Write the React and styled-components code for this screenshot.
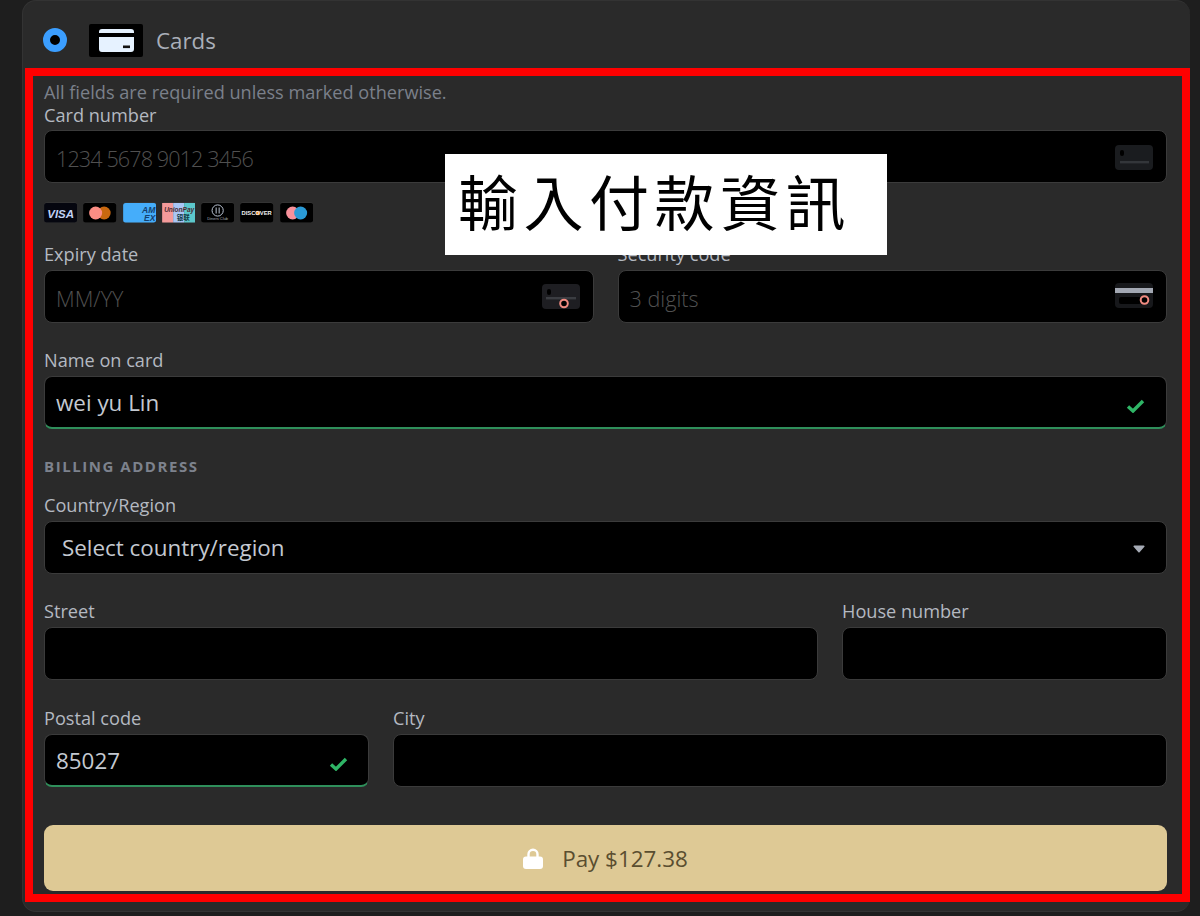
import React from "react";
import styled, { createGlobalStyle } from "styled-components";

const GlobalStyle = createGlobalStyle`
  html, body {
    margin: 0;
    background: #1e1e1e;
    font-family: "Open Sans", "Noto Sans", sans-serif;
  }
  * { box-sizing: border-box; }
`;

const Page = styled.div`
  position: relative;
  width: 1200px;
  height: 916px;
  overflow: hidden;
  padding-left: 22px;
`;

const Panel = styled.div`
  width: 1168px;
  height: 912px;
  background: #2a2a2a;
  border: 1px solid #333;
  border-right: 0;
  border-radius: 14px;
`;

const MethodHeader = styled.div`
  display: flex;
  align-items: center;
  height: 67px;
  padding: 11px 0 0 20px;
`;

const Radio = styled.span`
  width: 24px;
  height: 24px;
  border-radius: 50%;
  background: #000;
  border: 7px solid #3b9eff;
  margin-right: 22px;
`;

const MethodIcon = styled.span`
  display: flex;
  align-items: center;
  justify-content: center;
  width: 54px;
  height: 33px;
  background: #000;
  border-radius: 2px;
  margin-right: 13px;
`;

const MethodName = styled.span`
  font-size: 22.3px;
  color: #a9afb9;
`;

const Form = styled.form`
  margin-left: 2px;
  height: 834px;
  border: 8px solid #fe0000;
  padding: 5px 15px 0 11px;
`;

const Hint = styled.p`
  margin: 0;
  font-size: 18.15px;
  line-height: 22px;
  color: #7b808a;
`;

const Label = styled.label`
  display: block;
  font-size: 18.15px;
  line-height: 24px;
  margin-bottom: ${props => props.$tight ? "3px" : "4px"};
  color: #b4b9c1;
  white-space: nowrap;
`;

const Row = styled.div`
  display: grid;
  grid-template-columns: ${props => props.$columns || "1fr"};
  column-gap: 24px;
  margin-top: ${props => props.$top || "25px"};
`;

const InputWrap = styled.div`
  position: relative;
`;

const Input = styled.input`
  display: block;
  width: 100%;
  height: 53px;
  padding: 0 ${props => props.$select ? "17px" : "11px"};
  margin: 0;
  background: #000;
  border: 1px solid #3b3b3b;
  border-bottom: ${props => props.$valid ? "2px solid #2f8f5b" : "1px solid #3b3b3b"};
  border-radius: 8px;
  outline: none;
  font-family: inherit;
  font-size: 22.4px;
  color: #c4c9d1;

  &:placeholder-shown {
    padding-top: 4px;
  }

  &::placeholder {
    font-size: 21.6px;
    font-weight: 300;
    letter-spacing: ${props => props.$narrow ? "-0.9px" : "0"};
    color: #505050;
    opacity: 1;
  }
`;

const FieldIcon = styled.span`
  position: absolute;
  top: ${props => props.$top};
  right: ${props => props.$right};
  display: flex;
`;

const Logos = styled.div`
  display: flex;
  gap: 6px;
  margin-top: 19px;
  height: 21px;
`;

const LogoSvg = styled.svg`
  display: block;
  width: 33.3px;
  height: 21px;
`;

const BillingTitle = styled.h3`
  margin: 27px 0 0;
  font-size: 15px;
  line-height: 20px;
  font-weight: 700;
  letter-spacing: 1.55px;
  color: #7d828d;
`;

const PayButton = styled.button`
  display: flex;
  align-items: center;
  justify-content: center;
  gap: 19px;
  width: 100%;
  height: 66px;
  margin-top: 38px;
  background: #dec995;
  border: 0;
  border-radius: 9px;
  font-family: inherit;
  font-size: 22.4px;
  color: #5a4e30;
`;

const Caption = styled.div`
  position: absolute;
  left: 445px;
  top: 154px;
  width: 442px;
  height: 101px;
  padding: 11px 0 0 13px;
  background: #fff;
  color: #000;
  font-family: "Noto Sans CJK TC", serif;
  font-size: 60px;
  line-height: 70px;
  letter-spacing: 5.5px;
  white-space: nowrap;
`;

const CardGlyph = () => (
  <svg width="35" height="23" viewBox="0 0 35 23">
    <path d="M3 0h29a3 3 0 0 1 3 3v1H0V3a3 3 0 0 1 3-3zM0 8h35v12a3 3 0 0 1-3 3H3a3 3 0 0 1-3-3z" fill="#e6f2ff" />
    <rect x="24" y="16.5" width="7" height="2.6" fill="#111" />
  </svg>
);

const NumberIcon = () => (
  <svg width="38" height="25" viewBox="0 0 38 25">
    <rect width="38" height="25" rx="4" fill="#1a1c1f" />
    <rect x="5" y="5" width="4" height="6" rx="2" fill="#000" />
    <rect x="5" y="16" width="29" height="2.4" fill="#33363a" />
  </svg>
);

const ExpiryIcon = () => (
  <svg width="38" height="25" viewBox="0 0 38 25">
    <rect width="38" height="25" rx="4" fill="#1e1e22" />
    <rect x="5" y="5" width="4" height="6" rx="2" fill="#000" />
    <rect x="4" y="13" width="30" height="2.4" fill="#3b3d42" />
    <circle cx="22" cy="19.5" r="3.8" fill="#000" stroke="#f08a80" strokeWidth="2" />
  </svg>
);

const SecurityIcon = () => (
  <svg width="38" height="25" viewBox="0 0 38 25">
    <rect width="38" height="25" rx="4" fill="#17181b" />
    <rect y="5" width="38" height="5" fill="#a3a8b3" />
    <rect x="4" y="14" width="22" height="7" rx="2" fill="#000" />
    <circle cx="29.5" cy="17" r="3.8" fill="#000" stroke="#f08a80" strokeWidth="2" />
  </svg>
);

const Check = () => (
  <svg width="19" height="14" viewBox="0 0 19 14">
    <path d="M2 7.5l5 4.5L17 2" fill="none" stroke="#2fb566" strokeWidth="3.4" />
  </svg>
);

const Caret = () => (
  <svg width="12" height="8" viewBox="0 0 12 8">
    <path d="M1.2 0.5h9.6a.8.8 0 0 1 .6 1.3L6.6 7.2a.8.8 0 0 1-1.2 0L.6 1.8A.8.8 0 0 1 1.2.5z" fill="#a6abb5" />
  </svg>
);

const Lock = () => (
  <svg width="20" height="21" viewBox="0 0 20 21">
    <path d="M5.5 10V6.2a4.5 4.5 0 0 1 9 0V10" fill="none" stroke="#fff" strokeWidth="2.4" />
    <rect y="8.5" width="20" height="12.5" rx="3" fill="#fff" />
  </svg>
);

const LogoFrame = ({ bg = "#000", children }) => (
  <LogoSvg viewBox="0 0 33 21">
    <rect width="33" height="21" rx="3" fill="#333" />
    <rect y="1" width="33" height="19.5" rx="2.5" fill={bg} />
    {children}
  </LogoSvg>
);

const Visa = () => (
  <LogoFrame bg="#05060f">
    <text x="16.5" y="15.5" textAnchor="middle" fontFamily="Liberation Sans" fontSize="11.5" fontWeight="700" fontStyle="italic" fill="#c2d2f5">VISA</text>
  </LogoFrame>
);

const Mastercard = () => (
  <LogoFrame>
    <circle cx="21" cy="11" r="6.5" fill="#c9680f" />
    <circle cx="12.5" cy="11" r="6.5" fill="#fb8d84" />
  </LogoFrame>
);

const Amex = () => (
  <LogoFrame bg="#45adfa">
    <text x="25.5" y="10.5" textAnchor="middle" fontFamily="Liberation Sans" fontSize="8.5" fontWeight="700" fontStyle="italic" fill="#14406e">AM</text>
    <text x="26.5" y="18.5" textAnchor="middle" fontFamily="Liberation Sans" fontSize="8.5" fontWeight="700" fontStyle="italic" fill="#14406e">EX</text>
  </LogoFrame>
);

const UnionPay = () => (
  <LogoSvg viewBox="0 0 33 21">
    <rect width="33" height="21" rx="2" fill="#333" />
    <rect y="1" width="11" height="19.5" fill="#f59a9a" />
    <rect x="11" y="1" width="11" height="19.5" fill="#a9c6f5" />
    <rect x="22" y="1" width="11" height="19.5" fill="#5cc8cc" />
    <text x="17" y="10" textAnchor="middle" fontFamily="Liberation Sans" fontSize="6.5" fontWeight="700" fontStyle="italic" fill="#4a2a30">UnionPay</text>
    <text x="21" y="18" textAnchor="middle" fontFamily="Noto Sans CJK SC" fontSize="6.5" fontWeight="700" fill="#123a44">银联</text>
  </LogoSvg>
);

const Diners = () => (
  <LogoFrame>
    <circle cx="16.5" cy="8.5" r="5.6" fill="none" stroke="#bcc6d6" strokeWidth="1" />
    <path d="M15 5.5v6M18 5.5v6" stroke="#bcc6d6" strokeWidth="1" />
    <text x="16.5" y="18" textAnchor="middle" fontFamily="Liberation Sans" fontSize="4" fill="#a8aeb8">Diners Club</text>
  </LogoFrame>
);

const Discover = () => (
  <LogoFrame>
    <circle cx="17.8" cy="11" r="2.3" fill="#e8862a" />
    <text x="16.5" y="13" textAnchor="middle" fontFamily="Liberation Sans" fontSize="5.8" fontWeight="700" fill="#f2f2f2">DISCOVER</text>
  </LogoFrame>
);

const Maestro = () => (
  <LogoFrame>
    <circle cx="12.5" cy="11" r="6.5" fill="#f8919b" />
    <circle cx="20.5" cy="11" r="6.5" fill="#2a9ad6" />
  </LogoFrame>
);

const Field = ({ label, tight, children }) => (
  <div>
    <Label $tight={tight}>{label}</Label>
    <InputWrap>{children}</InputWrap>
  </div>
);

const App = () => {
  return (
    <Page>
      <GlobalStyle />
      <Panel>
        <MethodHeader>
          <Radio />
          <MethodIcon><CardGlyph /></MethodIcon>
          <MethodName>Cards</MethodName>
        </MethodHeader>
        <Form>
          <Hint>All fields are required unless marked otherwise.</Hint>
          <Field label="Card number" tight>
            <Input placeholder="1234 5678 9012 3456" $narrow readOnly />
            <FieldIcon $top="15px" $right="14px"><NumberIcon /></FieldIcon>
          </Field>
          <Logos>
            <Visa />
            <Mastercard />
            <Amex />
            <UnionPay />
            <Diners />
            <Discover />
            <Maestro />
          </Logos>
          <Row $columns="1fr 1fr" $top="19px">
            <Field label="Expiry date">
              <Input placeholder="MM/YY" readOnly />
              <FieldIcon $top="14px" $right="14px"><ExpiryIcon /></FieldIcon>
            </Field>
            <Field label="Security code">
              <Input placeholder="3 digits" readOnly />
              <FieldIcon $top="13px" $right="14px"><SecurityIcon /></FieldIcon>
            </Field>
          </Row>
          <Row>
            <Field label="Name on card">
              <Input value="wei yu Lin" $valid readOnly />
              <FieldIcon $top="23px" $right="22px"><Check /></FieldIcon>
            </Field>
          </Row>
          <BillingTitle>BILLING ADDRESS</BillingTitle>
          <Row $top="17px">
            <Field label="Country/Region">
              <Input value="Select country/region" $select readOnly />
              <FieldIcon $top="24px" $right="22px"><Caret /></FieldIcon>
            </Field>
          </Row>
          <Row $columns="1fr 325px">
            <Field label="Street"><Input readOnly /></Field>
            <Field label="House number"><Input readOnly /></Field>
          </Row>
          <Row $columns="325px 1fr" $top="26px">
            <Field label="Postal code">
              <Input value="85027" $valid readOnly />
              <FieldIcon $top="23px" $right="21px"><Check /></FieldIcon>
            </Field>
            <Field label="City"><Input readOnly /></Field>
          </Row>
          <PayButton type="button">
            <Lock />
            Pay $127.38
          </PayButton>
        </Form>
      </Panel>
      <Caption>輸入付款資訊</Caption>
    </Page>
  );
};

export default App;
